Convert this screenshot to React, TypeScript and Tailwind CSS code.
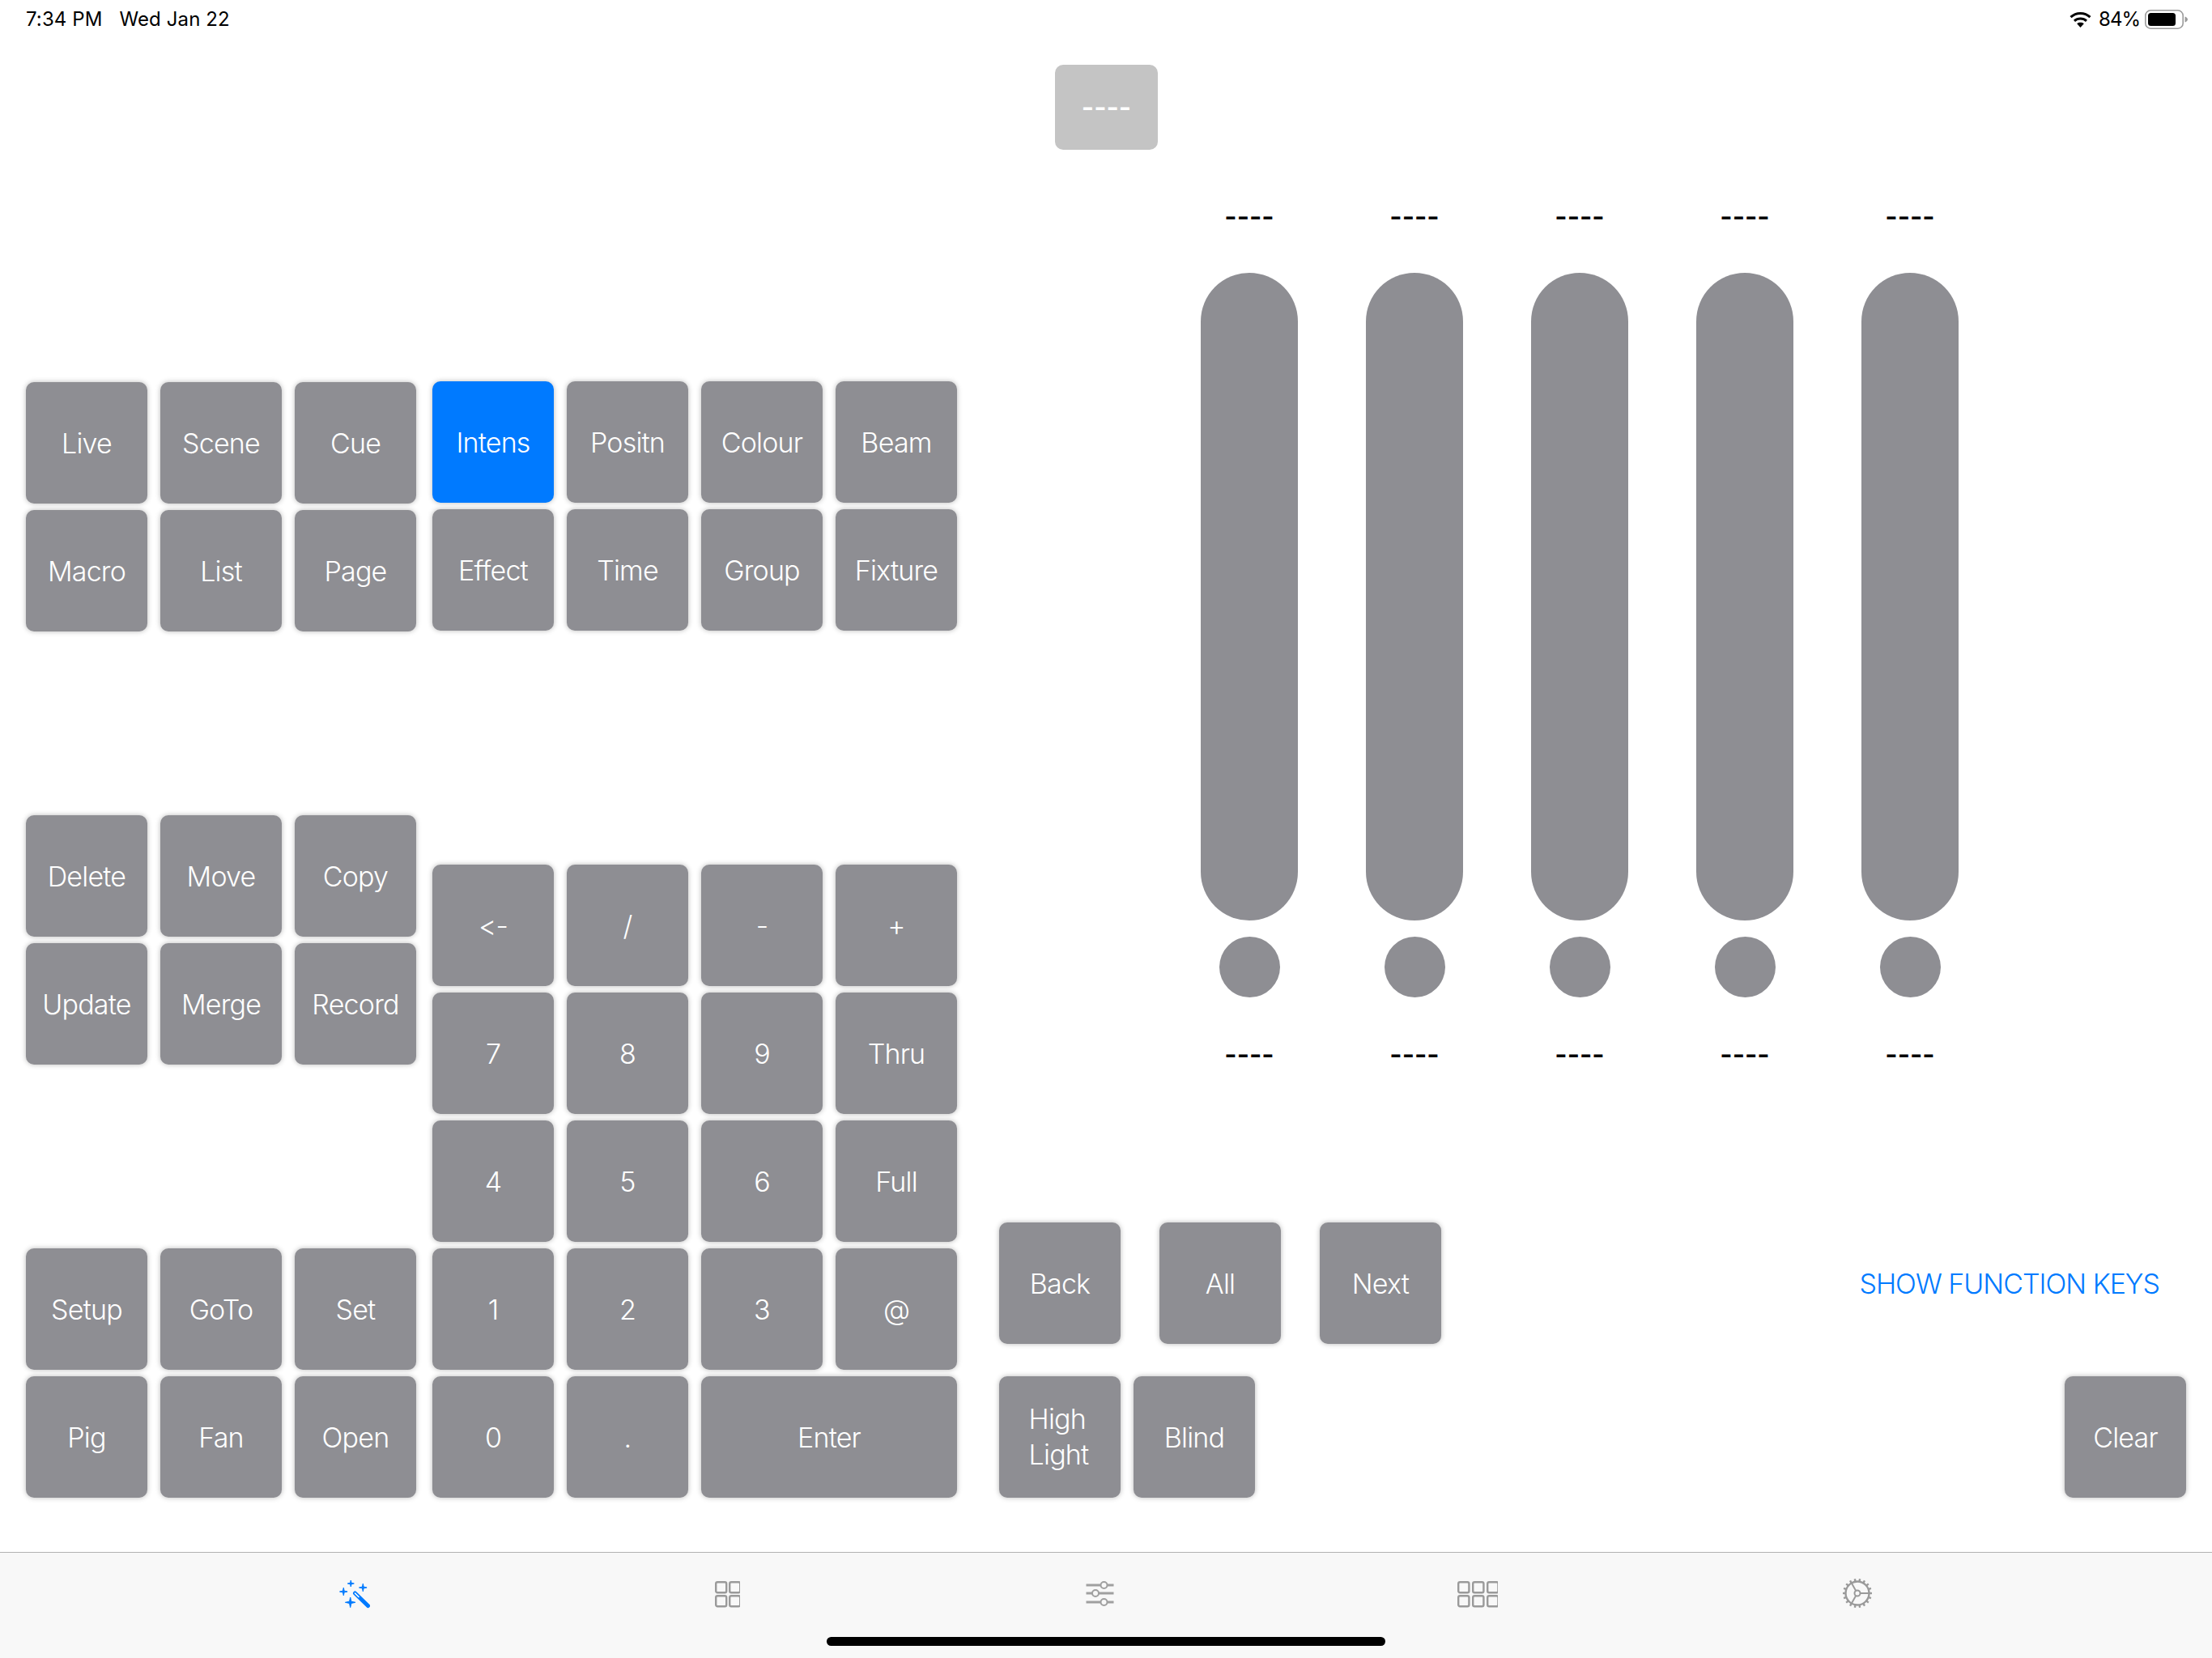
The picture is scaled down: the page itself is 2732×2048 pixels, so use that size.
import React from "react";

const font = "font-['Inter','Liberation_Sans',sans-serif] [font-feature-settings:'calt'_0,'liga'_0]";

function Key({ children, active = false, span = false }: { children: React.ReactNode; active?: boolean; span?: boolean }) {
  return (
    <div
      className={`${span ? "col-span-2" : "w-[150px]"} h-[150px] rounded-[10px] flex items-center justify-center text-white text-[34px] font-light tracking-[-0.8px] shadow-[0_0_6px_rgba(0,0,0,0.28)] ${
        active ? "bg-[#007aff]" : "bg-[#8e8e93]"
      }`}
    >
      {children}
    </div>
  );
}

function KeyGrid({ keys, cols4 = false }: { keys: string[]; cols4?: boolean }) {
  return (
    <div className={`grid ${cols4 ? "grid-cols-[repeat(4,150px)]" : "grid-cols-[repeat(3,150px)]"} gap-x-4 gap-y-2`}>
      {keys.map((k) => (
        <Key key={k} active={k === "Intens"} span={k === "Enter"}>
          {k}
        </Key>
      ))}
    </div>
  );
}

function Fader() {
  return (
    <div className="w-[204px] flex flex-col items-center">
      <div className="h-10 leading-[37px] text-[33px] font-semibold text-black">----</div>
      <div className="mt-12 w-[120px] h-[800px] rounded-full bg-[#8e8e93]" />
      <div className="mt-5 w-[75px] h-[75px] rounded-full bg-[#8e8e93]" />
      <div className="mt-[52px] h-10 leading-[37px] text-[33px] font-semibold text-black">----</div>
    </div>
  );
}

function Star({ x, y, r }: { x: number; y: number; r: number }) {
  const k = r * 0.18;
  return (
    <path
      d={`M${x} ${y - r}L${x + k} ${y - k}L${x + r} ${y}L${x + k} ${y + k}L${x} ${y + r}L${x - k} ${y + k}L${x - r} ${y}L${x - k} ${y - k}Z`}
      fill="#007aff"
      stroke="#007aff"
      strokeWidth="1"
      strokeLinejoin="round"
    />
  );
}

function WandIcon() {
  return (
    <svg width="38" height="40" viewBox="0 0 38 40">
      <Star x={14.3} y={8} r={4} />
      <Star x={29.3} y={13} r={4.8} />
      <Star x={5.3} y={18} r={4.8} />
      <Star x={13.7} y={31.3} r={6.3} />
      <line x1="19.5" y1="20" x2="35.5" y2="35.5" stroke="#007aff" strokeWidth="5" strokeLinecap="round" />
      <line x1="19.5" y1="20" x2="24" y2="24.5" stroke="#ffffff" strokeWidth="1.6" strokeLinecap="round" />
    </svg>
  );
}

function SquaresIcon({ cols }: { cols: number }) {
  const w = cols === 2 ? 31 : 50;
  const side = cols === 2 ? 13 : 13.2;
  const pitch = cols === 2 ? 17 : 18;
  const rects: React.ReactNode[] = [];
  for (let r = 0; r < 2; r++) {
    for (let c = 0; c < cols; c++) {
      rects.push(
        <rect key={`${r}-${c}`} x={1.2 + c * pitch} y={6.2 + r * 17} width={side} height={13} rx="2" fill="none" stroke="#9a9a9a" strokeWidth="2.4" />
      );
    }
  }
  return (
    <svg width={w} height="40" viewBox={`0 0 ${w} 40`}>
      {rects}
    </svg>
  );
}

function SlidersIcon() {
  const rows = [
    { y: 10, x: 22.5 },
    { y: 20, x: 12 },
    { y: 31, x: 22.5 },
  ];
  return (
    <svg width="35" height="40" viewBox="0 0 35 40">
      {rows.map((r) => (
        <g key={r.y}>
          <line x1="0.5" y1={r.y} x2="34.5" y2={r.y} stroke="#a0a0a0" strokeWidth="3" />
          <circle cx={r.x} cy={r.y} r="4" fill="#f8f8f8" stroke="#a0a0a0" strokeWidth="2" />
        </g>
      ))}
    </svg>
  );
}

function GearIcon() {
  const cx = 19;
  const cy = 20;
  const teeth = Array.from({ length: 18 }, (_, i) => (i * Math.PI * 2) / 18);
  return (
    <svg width="38" height="40" viewBox="0 0 38 40">
      <circle cx={cx} cy={cy} r="14.5" fill="none" stroke="#9a9a9a" strokeWidth="2.4" />
      {teeth.map((a, i) => (
        <line
          key={i}
          x1={cx + 14.5 * Math.cos(a)}
          y1={cy + 14.5 * Math.sin(a)}
          x2={cx + 18 * Math.cos(a)}
          y2={cy + 18 * Math.sin(a)}
          stroke="#9a9a9a"
          strokeWidth="2.4"
        />
      ))}
      <line x1={cx + 3.5} y1={cy} x2={cx + 14.5} y2={cy} stroke="#9a9a9a" strokeWidth="2" />
      <line x1={cx - 1.8} y1={cy - 3} x2={cx - 7.2} y2={cy - 12.5} stroke="#9a9a9a" strokeWidth="2" />
      <line x1={cx - 1.8} y1={cy + 3} x2={cx - 7.2} y2={cy + 12.5} stroke="#9a9a9a" strokeWidth="2" />
      <circle cx={cx} cy={cy} r="3.5" fill="none" stroke="#9a9a9a" strokeWidth="2" />
    </svg>
  );
}

function WifiIcon() {
  return (
    <svg width="27" height="20" viewBox="0 0 27 20">
      <path d="M1.5 7.2C8.2 0.9 18.8 0.9 25.5 7.2" fill="none" stroke="#000" strokeWidth="3" />
      <path d="M6 11.8C10.2 8 16.8 8 21 11.8" fill="none" stroke="#000" strokeWidth="3" />
      <path d="M9.2 15.2C11.6 13.3 15.4 13.3 17.8 15.2L13.5 20Z" fill="#000" />
    </svg>
  );
}

function BatteryIcon() {
  return (
    <svg width="54" height="24" viewBox="0 0 54 24">
      <rect x="0.8" y="0.8" width="46.4" height="22.4" rx="6.5" fill="none" stroke="#9b9b9b" strokeWidth="1.6" />
      <rect x="4" y="4" width="34" height="16" rx="3.5" fill="#000" />
      <path d="M49.5 8.5C51.5 9.2 53 10.4 53 12C53 13.6 51.5 14.8 49.5 15.5Z" fill="#9b9b9b" />
    </svg>
  );
}

export default function App() {
  return (
    <div className={`${font} relative w-[2732px] h-[2048px] bg-white flex flex-col overflow-hidden`}>
      <div className="h-12 shrink-0 flex items-center pl-8 pr-[29px] text-[24px] text-black">
        <span className="tracking-[0.1px]">7:34 PM</span>
        <span className="ml-[21px] tracking-[0.1px]">Wed Jan 22</span>
        <div className="ml-auto flex items-center">
          <WifiIcon />
          <span className="ml-[9px] mr-[6px] tracking-[-1px]">84%</span>
          <BatteryIcon />
        </div>
      </div>

      <div className="flex-1 flex">
        <div className="w-[1182px] shrink-0 pl-8 flex flex-col">
          <div className="mt-[423px] flex items-start gap-5">
            <div className="pt-px">
              <KeyGrid keys={["Live", "Scene", "Cue", "Macro", "List", "Page"]} />
            </div>
            <KeyGrid cols4 keys={["Intens", "Positn", "Colour", "Beam", "Effect", "Time", "Group", "Fixture"]} />
          </div>
          <div className="mt-[227px] flex items-start gap-5">
            <div className="flex flex-col">
              <KeyGrid keys={["Delete", "Move", "Copy", "Update", "Merge", "Record"]} />
              <div className="mt-[227px]">
                <KeyGrid keys={["Setup", "GoTo", "Set", "Pig", "Fan", "Open"]} />
              </div>
            </div>
            <div className="mt-[61px]">
              <KeyGrid cols4 keys={["<-", "/", "-", "+", "7", "8", "9", "Thru", "4", "5", "6", "Full", "1", "2", "3", "@", "0", ".", "Enter"]} />
            </div>
          </div>
        </div>

        <div className="flex-1 flex flex-col">
          <div className="mt-8 ml-[121px] w-[127px] h-[105px] rounded-[10px] bg-[#c4c4c4] flex items-center justify-center text-white text-[33px] font-semibold">
            ----
          </div>
          <div className="mt-16 ml-[259px] flex">
            {[0, 1, 2, 3, 4].map((i) => (
              <Fader key={i} />
            ))}
          </div>
          <div className="mt-[186px] pl-[52px] pr-[65px] flex items-center gap-12">
            <Key>Back</Key>
            <Key>All</Key>
            <Key>Next</Key>
            <span className="ml-auto text-[34px] font-light tracking-[-1px] text-[#007aff]">SHOW FUNCTION KEYS</span>
          </div>
          <div className="mt-10 pl-[52px] pr-8 flex gap-4">
            <Key>
              <span className="leading-[44px] text-left pr-[3px]">
                High
                <br />
                Light
              </span>
            </Key>
            <Key>Blind</Key>
            <div className="ml-auto">
              <Key>Clear</Key>
            </div>
          </div>
        </div>
      </div>

      <div className="h-[131px] shrink-0 bg-[#f8f8f8] border-t-[1.5px] border-[#b2b2b2] flex items-start pt-[30px] pl-[419px]">
        <WandIcon />
        <div className="ml-[426px]"><SquaresIcon cols={2} /></div>
        <div className="ml-[427px]"><SlidersIcon /></div>
        <div className="ml-[424px]"><SquaresIcon cols={3} /></div>
        <div className="ml-[425px]"><GearIcon /></div>
      </div>
      <div className="absolute left-[1021px] top-[2022px] w-[690px] h-[11px] rounded-full bg-black" />
    </div>
  );
}
